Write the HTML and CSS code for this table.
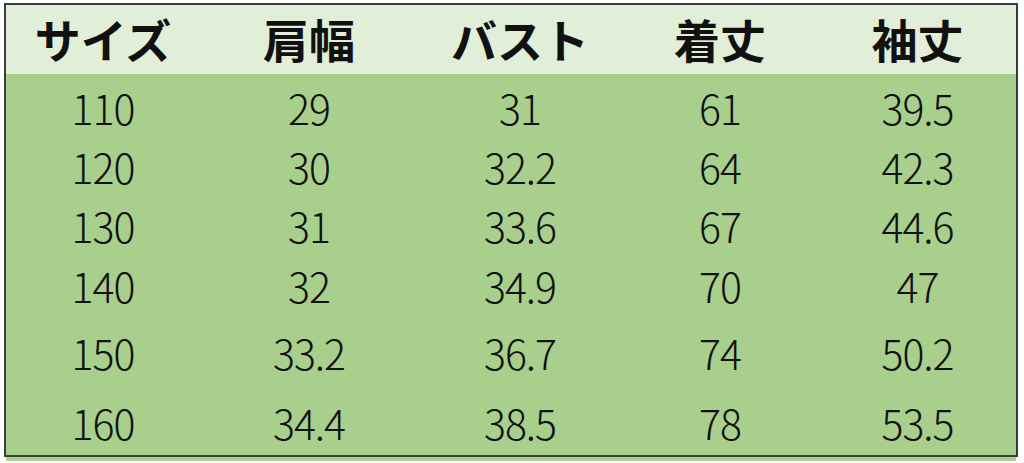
FILE: index.html
```html
<!DOCTYPE html>
<html lang="ja">
<head>
<meta charset="utf-8">
<link rel="stylesheet" href="styles.css">
</head>
<body>
<div class="sheet">
  <div class="table">
    <div class="row head">
      <div class="c">サイズ</div><div class="c">肩幅</div><div class="c">バスト</div><div class="c">着丈</div><div class="c">袖丈</div>
    </div>
    <div class="body">
      <div class="row r1"><div class="c">110</div><div class="c">29</div><div class="c">31</div><div class="c">61</div><div class="c">39.5</div></div>
      <div class="row r2"><div class="c">120</div><div class="c">30</div><div class="c">32.2</div><div class="c">64</div><div class="c">42.3</div></div>
      <div class="row r3"><div class="c">130</div><div class="c">31</div><div class="c">33.6</div><div class="c">67</div><div class="c">44.6</div></div>
      <div class="row r4"><div class="c">140</div><div class="c">32</div><div class="c">34.9</div><div class="c">70</div><div class="c">47</div></div>
      <div class="row r5"><div class="c">150</div><div class="c">33.2</div><div class="c">36.7</div><div class="c">74</div><div class="c">50.2</div></div>
      <div class="row r6"><div class="c">160</div><div class="c">34.4</div><div class="c">38.5</div><div class="c">78</div><div class="c">53.5</div></div>
    </div>
  </div>
  <div class="tail"></div>
</div>
</body>
</html>
```
FILE: styles.css
```css
html, body {
  margin: 0;
  padding: 0;
  background: #ffffff;
}
body {
  width: 1024px;
  height: 463px;
  overflow: hidden;
}
.sheet {
  padding: 3px 6px 0 4px;
}
.table {
  border: 2px solid #3c3c3c;
  background: #a9cf8d;
}
.row {
  display: grid;
  grid-template-columns: 194px 218px 204px 196px 199px;
  align-items: center;
}
.c {
  text-align: center;
  color: #111;
}
.head {
  height: 69px;
  background: #e1eed8;
}
.head .c {
  font-family: "Noto Sans CJK JP", sans-serif;
  font-weight: 700;
  font-size: 46px;
  line-height: 1;
  padding-bottom: 4px;
}
.body {
  padding-top: 3px;
}
.body .c {
  font-family: "Noto Sans CJK JP", sans-serif;
  font-weight: 300;
  font-size: 41px;
  letter-spacing: -1px;
  line-height: 1;
}
.r1 { height: 60px; }
.r2 { height: 58px; }
.r3 { height: 60px; }
.r4 { height: 60px; }
.r5 { height: 74px; }
.r6 { height: 66px; }
.tail {
  height: 4px;
  margin: 0 2px;
  background: #a9cf8d;
}
```
